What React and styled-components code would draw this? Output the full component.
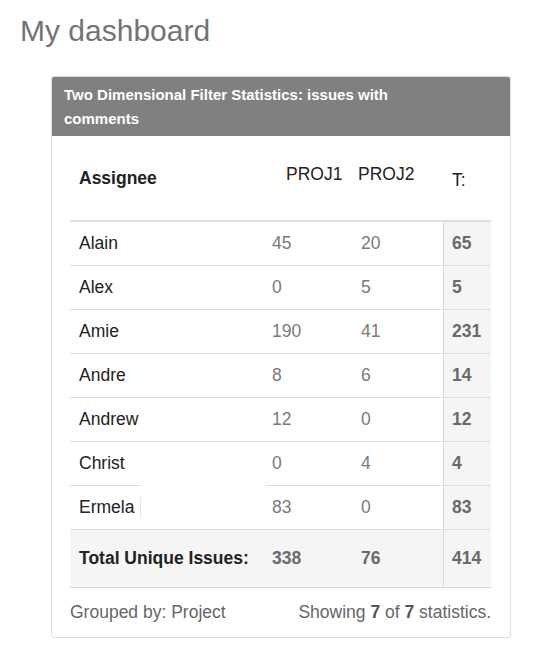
import React from "react";
import styled, { createGlobalStyle } from "styled-components";

const Global = createGlobalStyle`
  html, body { margin: 0; padding: 0; background: #fff; }
  body { font-family: "Liberation Sans", Arial, Helvetica, sans-serif; }
  *, *::before, *::after { box-sizing: border-box; }
`;

const Page = styled.div`
  width: 533px;
  min-height: 651px;
  padding: 11px 22px 0 20px;
`;

const Title = styled.h1`
  margin: 0;
  font-size: 30px;
  font-weight: 400;
  line-height: 40px;
  color: #737373;
`;

const Card = styled.section`
  margin: 25px 0 0 31px;
  width: 460px;
  border: 1px solid #dcdcdc;
  border-radius: 3px;
  overflow: hidden;
`;

const CardHeader = styled.header`
  background: #808080;
  color: #fff;
  font-size: 15px;
  font-weight: 700;
  line-height: 24px;
  padding: 6px 100px 5px 12px;
`;

const CardBody = styled.div`
  padding: 0 19px 0 18px;
`;

const Table = styled.table`
  width: 100%;
  border-collapse: separate;
  border-spacing: 0;
  table-layout: fixed;
  font-size: 17.5px;
`;

const Th = styled.th`
  height: 86px;
  padding: ${(p) => p.$pt || 0}px 0 ${(p) => p.$pb || 0}px ${(p) => p.$pl || 9}px;
  text-align: left;
  vertical-align: middle;
  font-weight: ${(p) => (p.$bold ? 700 : 400)};
  color: #222;
  border-bottom: 2px solid #dedede;
`;

const Td = styled.td`
  height: 44px;
  padding: 0 0 0 ${(p) => (p.$total ? 8 : 9)}px;
  text-align: left;
  vertical-align: middle;
  color: ${(p) => (p.$name ? "#222" : p.$total ? "#6a6a6a" : "#7a7a7a")};
  font-weight: ${(p) => (p.$total ? 700 : 400)};
  background-color: ${(p) => (p.$total ? "#f5f5f5" : "transparent")};
  border-left: ${(p) => (p.$total ? "1px solid #d8d8d8" : "none")};
  border-bottom: 1px solid #dedede;
  white-space: nowrap;
  overflow: hidden;
  &.gap {
    border-bottom-color: transparent;
    background-image: linear-gradient(#dedede, #dedede);
    background-repeat: no-repeat;
    background-origin: border-box;
    background-size: 71px 1px;
    background-position: 0 100%;
  }
  &.gapnum {
    border-bottom-color: transparent;
    background-image: linear-gradient(#dedede, #dedede);
    background-repeat: no-repeat;
    background-origin: border-box;
    background-size: calc(100% - 3px) 1px;
    background-position: 100% 100%;
  }
`;

const Clip = styled.span`
  display: inline-block;
  width: ${(p) => p.$w}px;
  vertical-align: bottom;
  white-space: nowrap;
  border-right: 1px solid #e6e6e6;
`;

const TotalRow = styled.tr`
  background: #f5f5f5;
`;

const TotalTd = styled.td`
  height: 58px;
  padding: 0 0 0 ${(p) => (p.$total ? 8 : 9)}px;
  font-weight: 700;
  color: ${(p) => (p.$label ? "#222" : "#6a6a6a")};
  border-bottom: 1px solid #d8d8d8;
  border-left: ${(p) => (p.$total ? "1px solid #d8d8d8" : "none")};
  white-space: nowrap;
`;

const Footer = styled.div`
  display: flex;
  justify-content: space-between;
  align-items: center;
  height: 49px;
  padding-bottom: 1px;
  font-size: 17.5px;
  color: #666;
`;

const Strong = styled.b`
  color: #555;
`;

const rows = [
  { name: "Alain", a: 45, b: 20, t: 65 },
  { name: "Alex", a: 0, b: 5, t: 5 },
  { name: "Amie", a: 190, b: 41, t: 231 },
  { name: "Andre", a: 8, b: 6, t: 14 },
  { name: "Andrew", a: 12, b: 0, t: 12 },
  { name: "Christ", a: 0, b: 4, t: 4, gap: true },
  { name: "Ermela", a: 83, b: 0, t: 83, clip: 62 },
];

export default function App() {
  return (
    <Page>
      <Global />
      <Title>My dashboard</Title>
      <Card>
        <CardHeader>Two Dimensional Filter Statistics: issues with comments</CardHeader>
        <CardBody>
          <Table>
            <colgroup>
              <col style={{ width: 193 }} />
              <col style={{ width: 89 }} />
              <col style={{ width: 91 }} />
              <col style={{ width: 48 }} />
            </colgroup>
            <thead>
              <tr>
                <Th $bold>Assignee</Th>
                <Th $pl={23} $pb={8}>PROJ1</Th>
                <Th $pl={6} $pb={8}>PROJ2</Th>
                <Th $pt={4}>T:</Th>
              </tr>
            </thead>
            <tbody>
              {rows.map((r) => (
                <tr key={r.name}>
                  <Td $name className={r.gap ? "gap" : undefined}>
                    {r.clip ? <Clip $w={r.clip}>{r.name}</Clip> : r.name}
                  </Td>
                  <Td className={r.gap ? "gapnum" : undefined}>{r.a}</Td>
                  <Td>{r.b}</Td>
                  <Td $total>{r.t}</Td>
                </tr>
              ))}
              <TotalRow>
                <TotalTd $label>Total Unique Issues:</TotalTd>
                <TotalTd>338</TotalTd>
                <TotalTd>76</TotalTd>
                <TotalTd $total>414</TotalTd>
              </TotalRow>
            </tbody>
          </Table>
          <Footer>
            <span>Grouped by: Project</span>
            <span>
              Showing <Strong>7</Strong> of <Strong>7</Strong> statistics.
            </span>
          </Footer>
        </CardBody>
      </Card>
    </Page>
  );
}
